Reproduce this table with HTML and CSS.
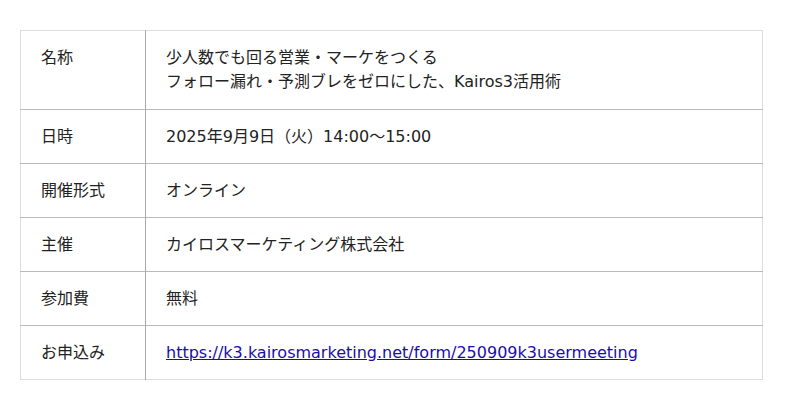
FILE: index.html
```html
<!DOCTYPE html>
<html lang="ja">
<head>
<meta charset="utf-8">
<link rel="stylesheet" href="styles.css">
</head>
<body>
<div class="wrap">
<table class="info">
<tr class="first"><th>名称</th><td>少人数でも回る営業・マーケをつくる<br>フォロー漏れ・予測ブレをゼロにした、Kairos3活用術</td></tr>
<tr><th>日時</th><td>2025年9月9日（火）14:00〜15:00</td></tr>
<tr><th>開催形式</th><td>オンライン</td></tr>
<tr><th>主催</th><td>カイロスマーケティング株式会社</td></tr>
<tr><th>参加費</th><td>無料</td></tr>
<tr><th>お申込み</th><td><a href="#">https://k3.kairosmarketing.net/form/250909k3usermeeting</a></td></tr>
</table>
</div>
</body>
</html>
```
FILE: styles.css
```css
html, body { margin: 0; padding: 0; background: #fff; }
body {
  font-family: "DejaVu Sans", "Noto Sans CJK JP", sans-serif;
  font-size: 16px;
  color: #222;
}
.wrap { padding: 30px 38px 0 20px; }
.info {
  width: 743px;
  border-collapse: collapse;
  border: 1px solid #ddd;
}
.info th, .info td {
  text-align: left;
  vertical-align: top;
  font-weight: normal;
  line-height: 24px;
  padding: 15px 20px 14px;
  border-top: 1px solid #bbb;
}
.info .first th, .info .first td { border-top: 1px solid #ddd; padding-bottom: 15px; }
.info th { width: 84px; border-right: 1px solid #aaa; }
.info a { color: #1a0dab; }
```
